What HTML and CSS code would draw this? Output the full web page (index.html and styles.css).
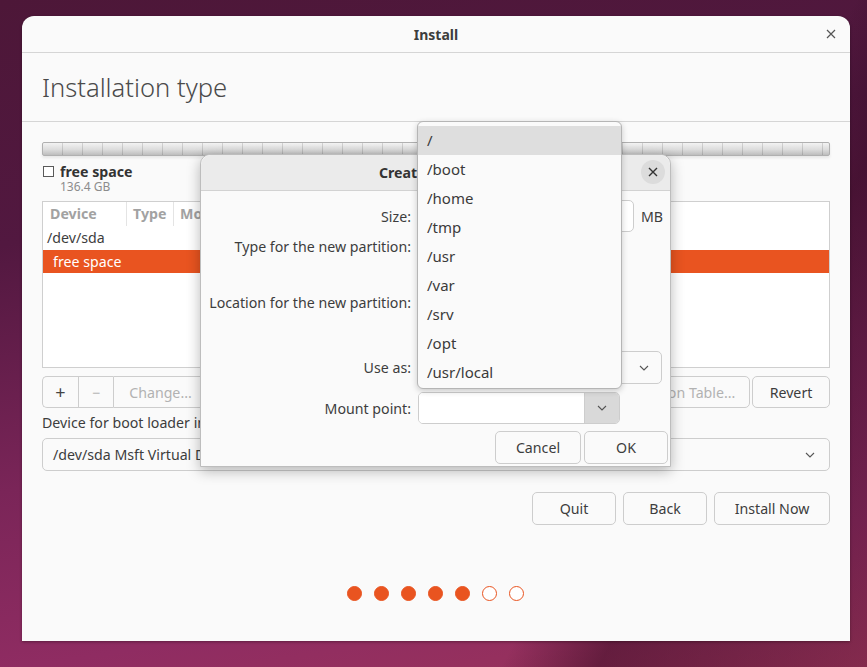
FILE: index.html
```html
<!DOCTYPE html>
<html>
<head>
<meta charset="utf-8">
<title>Install</title>
<link rel="stylesheet" href="styles.css">
</head>
<body>
<div class="desktop">
  <div class="window">
    <div class="titlebar">
      <span class="title">Install</span>
      <span class="wclose"><svg width="10" height="10" viewBox="0 0 10 10"><path d="M1 1L9 9M9 1L1 9" stroke="#555" stroke-width="1.2" fill="none"/></svg></span>
    </div>
    <div class="heading"><h1>Installation type</h1></div>
    <div class="content">
      <div class="pbar"></div>
      <div class="legend">
        <span class="chk"></span>
        <div class="ltext">
          <div class="lname">free space</div>
          <div class="lsize">136.4 GB</div>
        </div>
      </div>
      <div class="tree">
        <div class="thead">
          <span class="col c1">Device</span>
          <span class="col c2">Type</span>
          <span class="col c3">Mount point</span>
        </div>
        <div class="trow">/dev/sda</div>
        <div class="trow sel">free space</div>
      </div>
      <div class="btnrow">
        <div class="group">
          <button class="btn gb plus">+</button>
          <button class="btn gb dis">−</button>
          <button class="btn gb dis change">Change...</button>
        </div>
        <div class="spacer"></div>
        <button class="btn dis newtable">New Partition Table...</button>
        <button class="btn revert">Revert</button>
      </div>
      <div class="bootlabel">Device for boot loader installation:</div>
      <div class="combo wide">
        <span>/dev/sda Msft Virtual Disk (136.4 GB)</span>
        <svg class="chev" width="10" height="6" viewBox="0 0 10 6"><path d="M1 1L5 5L9 1" stroke="#555" stroke-width="1.1" fill="none"/></svg>
      </div>
      <div class="nav">
        <button class="btn quit">Quit</button>
        <button class="btn back">Back</button>
        <button class="btn install">Install Now</button>
      </div>
      <div class="dots">
        <span class="dot on"></span><span class="dot on"></span><span class="dot on"></span><span class="dot on"></span><span class="dot on"></span><span class="dot"></span><span class="dot"></span>
      </div>
    </div>
  </div>

  <div class="dialog">
    <div class="dtitle">
      <span>Create partition</span>
      <span class="dclose"><svg width="10" height="10" viewBox="0 0 10 10"><path d="M1 1L9 9M9 1L1 9" stroke="#333" stroke-width="1.4" fill="none"/></svg></span>
    </div>
    <div class="dbody">
      <div class="drow r-size">
        <div class="dlabel">Size:</div>
        <div class="dfield">
          <div class="spin"></div>
          <span class="unit">MB</span>
        </div>
      </div>
      <div class="drow r-type">
        <div class="dlabel">Type for the new partition:</div>
      </div>
      <div class="drow r-loc">
        <div class="dlabel">Location for the new partition:</div>
      </div>
      <div class="drow r-use">
        <div class="dlabel">Use as:</div>
        <div class="combo usecombo">
          <span></span>
          <svg class="chev" width="10" height="6" viewBox="0 0 10 6"><path d="M1 1L5 5L9 1" stroke="#555" stroke-width="1.1" fill="none"/></svg>
        </div>
      </div>
      <div class="drow r-mount">
        <div class="dlabel">Mount point:</div>
        <div class="mcombo">
          <div class="mentry"></div>
          <div class="mbtn"><svg width="10" height="6" viewBox="0 0 10 6"><path d="M1 1L5 5L9 1" stroke="#555" stroke-width="1.1" fill="none"/></svg></div>
        </div>
      </div>
      <div class="dbtns">
        <button class="btn cancel">Cancel</button>
        <button class="btn ok">OK</button>
      </div>
    </div>
  </div>

  <div class="menu">
    <div class="mi hl">/</div>
    <div class="mi">/boot</div>
    <div class="mi">/home</div>
    <div class="mi">/tmp</div>
    <div class="mi">/usr</div>
    <div class="mi">/var</div>
    <div class="mi">/srv</div>
    <div class="mi">/opt</div>
    <div class="mi">/usr/local</div>
  </div>
</div>
</body>
</html>
```
FILE: styles.css
```css
* { box-sizing: border-box; }
html, body { margin: 0; padding: 0; }
body {
  width: 867px;
  height: 667px;
  overflow: hidden;
  font-family: "Noto Sans", "DejaVu Sans", sans-serif;
  font-size: 14.2px;
  color: #3d3d3d;
}
.desktop {
  position: relative;
  width: 867px;
  height: 667px;
  background:
    linear-gradient(118deg, rgba(0,0,0,0) 0%, rgba(0,0,0,0) 70%, rgba(40,5,25,0.45) 78%, rgba(40,5,25,0.2) 100%),
    linear-gradient(170deg, #4d1738 0%, #521840 30%, #7a2558 60%, #8f2c62 82%, #9b345a 100%);
}
.window {
  position: absolute;
  left: 22px;
  top: 16px;
  width: 828px;
  height: 625px;
  background: #fafafa;
  border-radius: 12px 12px 0 0;
  display: flex;
  flex-direction: column;
  box-shadow: 0 1px 3px rgba(0,0,0,0.35);
}
.titlebar {
  height: 37px;
  border-bottom: 1px solid #d5d5d5;
  display: flex;
  align-items: center;
  justify-content: center;
  position: relative;
}
.title { font-weight: bold; font-size: 14px; color: #3d3d3d; }
.wclose {
  position: absolute;
  right: 14px;
  top: 13px;
  width: 10px;
  height: 10px;
  display: flex;
}
.heading {
  height: 69px;
  border-bottom: 1px solid #d5d5d5;
  display: flex;
  align-items: center;
  padding-left: 20px;
}
.heading h1 {
  margin: 0;
  font-size: 25.6px;
  font-weight: 300;
  color: #4a4a4a;
}
.content {
  padding: 0 20px;
  display: flex;
  flex-direction: column;
}
.pbar {
  margin-top: 20px;
  height: 14px;
  border: 1px solid #b0b0b0;
  border-radius: 2px;
  background:
    repeating-linear-gradient(90deg, rgba(0,0,0,0) 0 19px, rgba(0,0,0,0.13) 19px 20px),
    linear-gradient(#f3f3f3, #dcdcdc 55%, #bdbdbd);
  box-shadow: 0 2px 3px rgba(0,0,0,0.08);
}
.legend {
  margin-top: 8px;
  display: flex;
  align-items: flex-start;
  height: 31px;
}
.chk {
  width: 11px;
  height: 11px;
  border: 1px solid #5a5a5a;
  margin-top: 2px;
  margin-left: 1px;
  background: #fff;
}
.ltext { margin-left: 6px; }
.lname { font-weight: bold; line-height: 16px; font-size: 14.2px; color: #333; }
.lsize { font-size: 12px; line-height: 14px; color: #8c8c8c; }
.tree {
  margin-top: 6px;
  height: 167px;
  border: 1px solid #cfcfcf;
  background: #fff;
}
.thead {
  height: 24px;
  display: flex;
  align-items: center;
  color: #a2a2a2;
  font-weight: bold;
}
.col { height: 24px; line-height: 24px; }
.c1 { width: 84px; padding-left: 7px; border-right: 1px solid #e4e4e4; }
.c2 { width: 47px; padding-left: 6px; border-right: 1px solid #e4e4e4; }
.c3 { padding-left: 6px; }
.trow { height: 24px; line-height: 24px; padding-left: 4px; }
.trow.sel { background: #e95420; color: #fff; padding-left: 10px; height: 23px; line-height: 23px; }
.btnrow {
  margin-top: 8px;
  height: 32px;
  display: flex;
  gap: 2px;
}
.spacer { flex: 1; }
.btn {
  font-family: inherit;
  font-size: 14.2px;
  color: #3d3d3d;
  background: #fafafa;
  border: 1px solid #cdcdcd;
  border-radius: 5px;
  height: 100%;
  padding: 0;
  margin: 0;
}
.btn.dis { color: #b2b2b2; }
.group { display: flex; }
.gb { border-radius: 0; border-right: none; }
.gb:first-child { border-radius: 5px 0 0 5px; }
.gb:last-child { border-radius: 0 5px 5px 0; border-right: 1px solid #cdcdcd; }
.plus { width: 36px; font-size: 18px; color: #444; }
.gb.dis:nth-child(2) { width: 35px; }
.change { width: 95px; }
.newtable { width: 170px; }
.revert { width: 78px; }
.bootlabel {
  margin-top: 6px;
  line-height: 18px;
}
.combo {
  display: flex;
  align-items: center;
  justify-content: space-between;
  border: 1px solid #cdcdcd;
  border-radius: 5px;
  background: #fafafa;
}
.combo.wide {
  margin-top: 6px;
  height: 33px;
  padding: 0 14px 0 10px;
}
.nav {
  margin-top: 21px;
  height: 33px;
  display: flex;
  justify-content: flex-end;
  gap: 7px;
}
.quit { width: 84px; }
.back { width: 84px; }
.install { width: 116px; }
.dots {
  margin-top: 61px;
  display: flex;
  justify-content: center;
  gap: 12px;
  padding-right: 2px;
}
.dot {
  width: 15px;
  height: 15px;
  border-radius: 50%;
  border: 1.3px solid #e95420;
  background: #fff;
}
.dot.on { background: #e95420; }

/* dialog */
.dialog {
  position: absolute;
  left: 200px;
  top: 154px;
  width: 471px;
  height: 313px;
  background: #fafafa;
  border: 1px solid #bdbdbd;
  border-radius: 10px 10px 0 0;
  box-shadow: 0 4px 14px rgba(0,0,0,0.28);
  display: flex;
  flex-direction: column;
}
.dtitle {
  height: 36px;
  background: #ebebeb;
  border-bottom: 1px solid #d2d2d2;
  border-radius: 10px 10px 0 0;
  display: flex;
  align-items: center;
  justify-content: center;
  font-weight: bold;
  font-size: 14.2px;
  color: #333;
  position: relative;
}
.dclose {
  position: absolute;
  right: 5px;
  top: 5px;
  width: 24px;
  height: 24px;
  border-radius: 50%;
  background: #dcdcdc;
  display: flex;
  align-items: center;
  justify-content: center;
}
.dbody {
  padding-top: 9px;
  display: flex;
  flex-direction: column;
}
.drow { display: flex; align-items: center; }
.dlabel {
  width: 210px;
  text-align: right;
  flex: none;
}
.r-size { height: 32px; }
.dfield { display: flex; align-items: center; margin-left: 7px; }
.spin {
  width: 216px;
  height: 32px;
  border: 1px solid #cdcdcd;
  border-radius: 5px;
  background: #fff;
}
.unit { margin-left: 7px; }
.r-type, .r-loc { height: 56px; align-items: flex-start; }
.r-type .dlabel, .r-loc .dlabel { line-height: 30px; }
.r-use { margin-top: 7px; height: 33px; }
.usecombo {
  margin-left: 7px;
  width: 244px;
  height: 33px;
  padding: 0 12px;
}
.r-mount { margin-top: 8px; height: 32px; }
.mcombo {
  margin-left: 7px;
  width: 202px;
  height: 32px;
  display: flex;
  border: 1px solid #cdcdcd;
  border-radius: 5px;
  overflow: hidden;
}
.mentry { flex: 1; background: #fff; }
.mbtn {
  width: 35px;
  background: #d9d9d9;
  display: flex;
  align-items: center;
  justify-content: center;
  border-left: 1px solid #cdcdcd;
}
.dbtns {
  margin-top: 7px;
  height: 33px;
  display: flex;
  justify-content: flex-end;
  gap: 3px;
  padding-right: 2px;
}
.cancel { width: 86px; }
.ok { width: 84px; }

/* popup menu */
.menu {
  position: absolute;
  left: 417px;
  top: 121px;
  width: 205px;
  height: 268px;
  background: #fafafa;
  border: 1px solid #b5b5b5;
  border-radius: 6px;
  box-shadow: 0 2px 6px rgba(0,0,0,0.2);
  padding-top: 4px;
  font-size: 15px;
  color: #3a3a3a;
}
.mi {
  height: 29px;
  line-height: 29px;
  padding-left: 9px;
}
.mi.hl { background: #dedede; }
```
